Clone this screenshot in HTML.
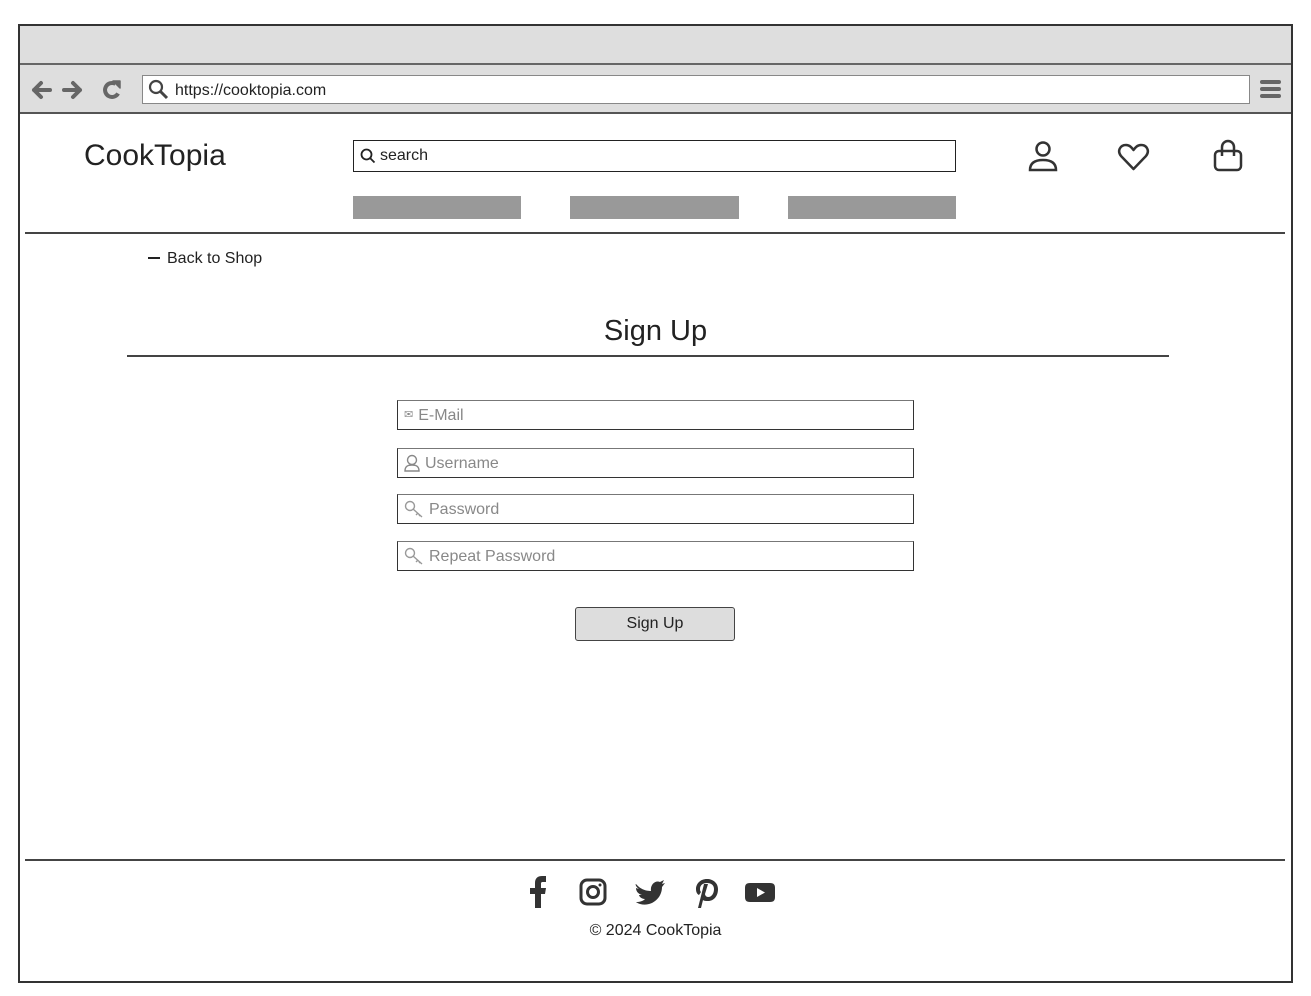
<!DOCTYPE html>
<html><head><meta charset="utf-8"><style>
*{margin:0;padding:0;box-sizing:border-box}
body{width:1311px;height:996px;background:#fff;font-family:"Liberation Sans",sans-serif;color:#222;position:relative;overflow:hidden}
.a{position:absolute}
.inp{position:absolute;left:397px;width:517px;height:30px;border:1.5px solid #333;border-top-color:#777;font-size:16px;color:#888;padding-left:6px;line-height:27px;display:flex;align-items:center;gap:5px}
.bar{position:absolute;top:196px;height:23px;background:#999}
</style></head><body>
<div class="a" style="left:18px;top:24px;width:1275px;height:959px;border:2px solid #333;"></div>
<div class="a" style="left:20px;top:26px;width:1271px;height:88px;background:#dedede;border-bottom:2px solid #555"></div>
<div class="a" style="left:20px;top:63px;width:1271px;height:2px;background:#666"></div>
<svg class="a" style="left:30px;top:78px" width="95" height="24" viewBox="0 0 95 24" fill="none" stroke="#666" stroke-width="4" stroke-linecap="round" stroke-linejoin="round">
<path d="M20 12H4M11 5L4 12L11 19"/><path d="M34 12H50M43 5L50 12L43 19"/><path d="M85.5 5.9A7 7 0 1 0 88.1 15.5" stroke-linecap="butt"/><polygon points="83,3 90,3 90,10" fill="#666" stroke-width="1.5"/></svg>
<div class="a" style="left:142px;top:75px;width:1108px;height:29px;background:#fff;border:1.5px solid #888"></div>
<svg class="a" style="left:148px;top:79px" width="22" height="22" viewBox="0 0 22 22" fill="none" stroke="#444" stroke-width="2.2"><circle cx="8" cy="8" r="6"/><path d="M12.5 12.5L19 19" stroke-width="3"/></svg>
<div class="a" style="left:175px;top:82px;font-size:16px;color:#222">https://cooktopia.com</div>
<div class="a" style="left:1260px;top:80px;width:21px;height:4px;background:#666;border-radius:2px;box-shadow:0 7px 0 #666,0 14px 0 #666"></div>

<div class="a" style="left:84px;top:139px;font-size:30px;color:#222">CookTopia</div>
<div class="a" style="left:353px;top:140px;width:603px;height:32px;border:1.5px solid #222"></div>
<svg class="a" style="left:360px;top:148px" width="16" height="16" viewBox="0 0 16 16" fill="none" stroke="#222" stroke-width="1.8"><circle cx="6.5" cy="6.5" r="5"/><path d="M10 10L14.5 14.5"/></svg>
<div class="a" style="left:380px;top:147px;font-size:16px">search</div>
<svg class="a" style="left:1028px;top:140px" width="30" height="32" viewBox="0 0 30 32" fill="none" stroke="#333" stroke-width="2.5"><circle cx="15" cy="9" r="6.5"/><path d="M2 30C2 22 8 20 15 20C22 20 28 22 28 30Z"/></svg>
<svg class="a" style="left:1117px;top:142px" width="33" height="30" viewBox="0 0 33 30" fill="none" stroke="#333" stroke-width="2.5" stroke-linejoin="round"><path d="M16.5 27L4 14C0 9 3 3 9 3C13 3 15 6 16.5 8C18 6 20 3 24 3C30 3 33 9 29 14Z"/></svg>
<svg class="a" style="left:1213px;top:139px" width="30" height="34" viewBox="0 0 30 34" fill="none" stroke="#333" stroke-width="2.5"><rect x="2" y="12" width="26" height="19" rx="4"/><path d="M9 17V8A6 6 0 0 1 21 8V17"/></svg>
<div class="bar" style="left:353px;width:168px"></div>
<div class="bar" style="left:570px;width:169px"></div>
<div class="bar" style="left:788px;width:168px"></div>
<div class="a" style="left:25px;top:232px;width:1260px;height:1.5px;background:#444"></div>

<div class="a" style="left:148px;top:257px;width:12px;height:2px;background:#222"></div>
<div class="a" style="left:167px;top:250px;font-size:16px">Back to Shop</div>
<div class="a" style="left:0;width:1311px;top:315px;text-align:center;font-size:29px">Sign Up</div>
<div class="a" style="left:127px;top:355px;width:1042px;height:1.5px;background:#444"></div>

<div class="inp" style="top:400px"><span style="font-size:11px">✉</span>E-Mail</div>
<div class="inp" style="top:448px"><svg width="16" height="18" viewBox="0 0 16 18" fill="none" stroke="#888" stroke-width="1.4"><circle cx="8" cy="6" r="4.5"/><path d="M1 17C1 12 4 11 8 11C12 11 15 12 15 17Z"/></svg>Username</div>
<div class="inp" style="top:494px"><svg width="20" height="18" viewBox="0 0 20 18" fill="none" stroke="#999" stroke-width="1.4"><circle cx="6" cy="6" r="4.5"/><path d="M9 9L18 17M14 13L12 15M16 15L15 16"/></svg>Password</div>
<div class="inp" style="top:541px"><svg width="20" height="18" viewBox="0 0 20 18" fill="none" stroke="#999" stroke-width="1.4"><circle cx="6" cy="6" r="4.5"/><path d="M9 9L18 17M14 13L12 15M16 15L15 16"/></svg>Repeat Password</div>

<div class="a" style="left:575px;top:607px;width:160px;height:34px;background:#ddd;border:1.5px solid #444;border-radius:3px;text-align:center;line-height:31px;font-size:16px">Sign Up</div>

<div class="a" style="left:25px;top:859px;width:1260px;height:1.5px;background:#444"></div>
<svg class="a" style="left:526px;top:876px" width="252" height="32" viewBox="0 0 252 32" fill="#333">
<path d="M9 32V18H4V12H9V7C9 2 12 0 16 0H20V6H17C15 6 15 7 15 8V12H20L19 18H15V32Z"/>
<g fill="none" stroke="#333" stroke-width="3"><rect x="55" y="4" width="24" height="24" rx="6"/><circle cx="67" cy="16" r="5.5"/></g><circle cx="74" cy="9" r="1.5"/>
<path d="M110 8C115 14 121 15 125 15C124 9 129 4 134 6L138 4L136 8L139 7L136 11C136 22 126 31 114 28C111 27 110 26 110 26C114 26 117 25 119 23C115 23 113 20 113 19L116 19C112 18 110 15 110 12L113 13C110 11 109 8 110 8Z"/>
<path d="M181 3C174 3 170 8 170 13C170 16 171 18 173 19L175 16C174 15 174 14 174 13C174 9 177 7 181 7C185 7 188 9 188 13C188 17 186 21 182 21C180 21 179 19 179 18L182 8H178L172 32H175L177 24C178 25 180 25 182 25C188 25 192 20 192 13C192 7 187 3 181 3Z"/>
<path d="M224 7H244C248 7 249 9 249 12V21C249 24 248 26 244 26H224C220 26 219 24 219 21V12C219 9 220 7 224 7Z"/><path d="M231 12V21L239 16.5Z" fill="#fff"/>
</svg>
<div class="a" style="left:0;width:1311px;top:922px;text-align:center;font-size:16px">© 2024 CookTopia</div>
</body></html>
